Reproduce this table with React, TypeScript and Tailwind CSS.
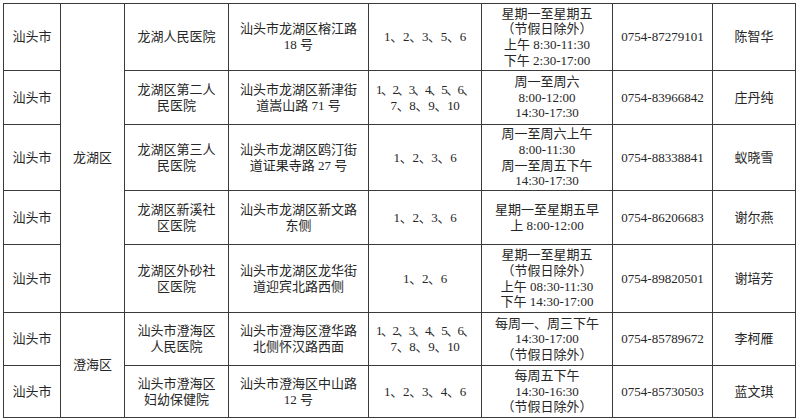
const rows = [
  {
    hosp: '龙湖人民医院',
    addr: '汕头市龙湖区榕江路\n18 号',
    dept: ['1、2、3、5、6'],
    time: ['星期一至星期五', '（节假日除外）', '上午 8:30-11:30', '下午 2:30-17:00'],
    phone: '0754-87279101',
    name: '陈智华',
    h: 'h-[67px]',
  },
  {
    hosp: '龙湖区第二人\n民医院',
    addr: '汕头市龙湖区新津街\n道嵩山路 71 号',
    dept: ['1、2、3、4、5、6、', '7、8、9、10'],
    time: ['周一至周六', '8:00-12:00', '14:30-17:30'],
    phone: '0754-83966842',
    name: '庄丹纯',
    h: 'h-[54px]',
  },
  {
    hosp: '龙湖区第三人\n民医院',
    addr: '汕头市龙湖区鸥汀街\n道证果寺路 27 号',
    dept: ['1、2、3、6'],
    time: ['周一至周六上午', '8:00-11:30', '周一至周五下午', '14:30-17:30'],
    phone: '0754-88338841',
    name: '蚁晓雪',
    h: 'h-[66px]',
  },
  {
    hosp: '龙湖区新溪社\n区医院',
    addr: '汕头市龙湖区新文路\n东侧',
    dept: ['1、2、3、6'],
    time: ['星期一至星期五早', '上 8:00-12:00'],
    phone: '0754-86206683',
    name: '谢尔燕',
    h: 'h-[54px]',
  },
  {
    hosp: '龙湖区外砂社\n区医院',
    addr: '汕头市龙湖区龙华街\n道迎宾北路西侧',
    dept: ['1、2、6'],
    time: ['星期一至星期五', '（节假日除外）', '上午 08:30-11:30', '下午 14:30-17:00'],
    phone: '0754-89820501',
    name: '谢培芳',
    h: 'h-[68px]',
  },
  {
    hosp: '汕头市澄海区\n人民医院',
    addr: '汕头市澄海区澄华路\n北侧怀汉路西面',
    dept: ['1、2、3、4、5、6、', '7、8、9、10'],
    time: ['每周一、周三下午', '14:30-17:00', '（节假日除外）'],
    phone: '0754-85789672',
    name: '李柯雁',
    h: 'h-[53px]',
  },
  {
    hosp: '汕头市澄海区\n妇幼保健院',
    addr: '汕头市澄海区中山路\n12 号',
    dept: ['1、2、3、4、6'],
    time: ['每周五下午', '14:30-16:30', '（节假日除外）'],
    phone: '0754-85730503',
    name: '蓝文琪',
    h: 'h-[52px]',
  },
];

const cell = 'border border-[#3a3a3a] p-0 text-center align-middle whitespace-pre-line';

function TimeLine({ text }: { text: string }) {
  if (text.startsWith('（')) {
    return (
      <div className="whitespace-nowrap">
        <span className="inline-block w-[13px] text-right">（</span>
        {text.slice(1, -1)}
        <span className="inline-block w-[13px] text-left">）</span>
      </div>
    );
  }
  return <div className="whitespace-nowrap">{text}</div>;
}

export default function App() {
  return (
    <div className="w-[800px] h-[420px] bg-white pt-[3px] pl-[3px] overflow-hidden">
      <table
        className="table-fixed border-collapse w-[792px] text-[13px] leading-[15.6px] text-[#262626]"
        style={{ fontFamily: "'Liberation Serif', 'Noto Sans CJK SC', serif" }}
      >
        <colgroup>
          <col className="w-[57px]" />
          <col className="w-[64px]" />
          <col className="w-[104px]" />
          <col className="w-[140px]" />
          <col className="w-[113px]" />
          <col className="w-[131px]" />
          <col className="w-[100px]" />
          <col className="w-[83px]" />
        </colgroup>
        <tbody>
          {rows.map((r, i) => (
            <tr key={i} className={r.h}>
              <td className={cell}>汕头市</td>
              {i === 0 && (
                <td rowSpan={5} className={cell}>
                  龙湖区
                </td>
              )}
              {i === 5 && (
                <td rowSpan={2} className={cell}>
                  澄海区
                </td>
              )}
              <td className={cell}>{r.hosp}</td>
              <td className={cell}>{r.addr}</td>
              <td className={cell}>
                {r.dept.map((d, j) => (
                  <div
                    key={j}
                    className={
                      r.dept.length > 1 && j === 0
                        ? 'whitespace-nowrap tracking-[-1.6px]'
                        : 'whitespace-nowrap tracking-[-0.3px]'
                    }
                  >
                    {d}
                  </div>
                ))}
              </td>
              <td className={cell}>
                {r.time.map((t, j) => (
                  <TimeLine key={j} text={t} />
                ))}
              </td>
              <td className={cell}>{r.phone}</td>
              <td className={cell}>{r.name}</td>
            </tr>
          ))}
        </tbody>
      </table>
    </div>
  );
}
